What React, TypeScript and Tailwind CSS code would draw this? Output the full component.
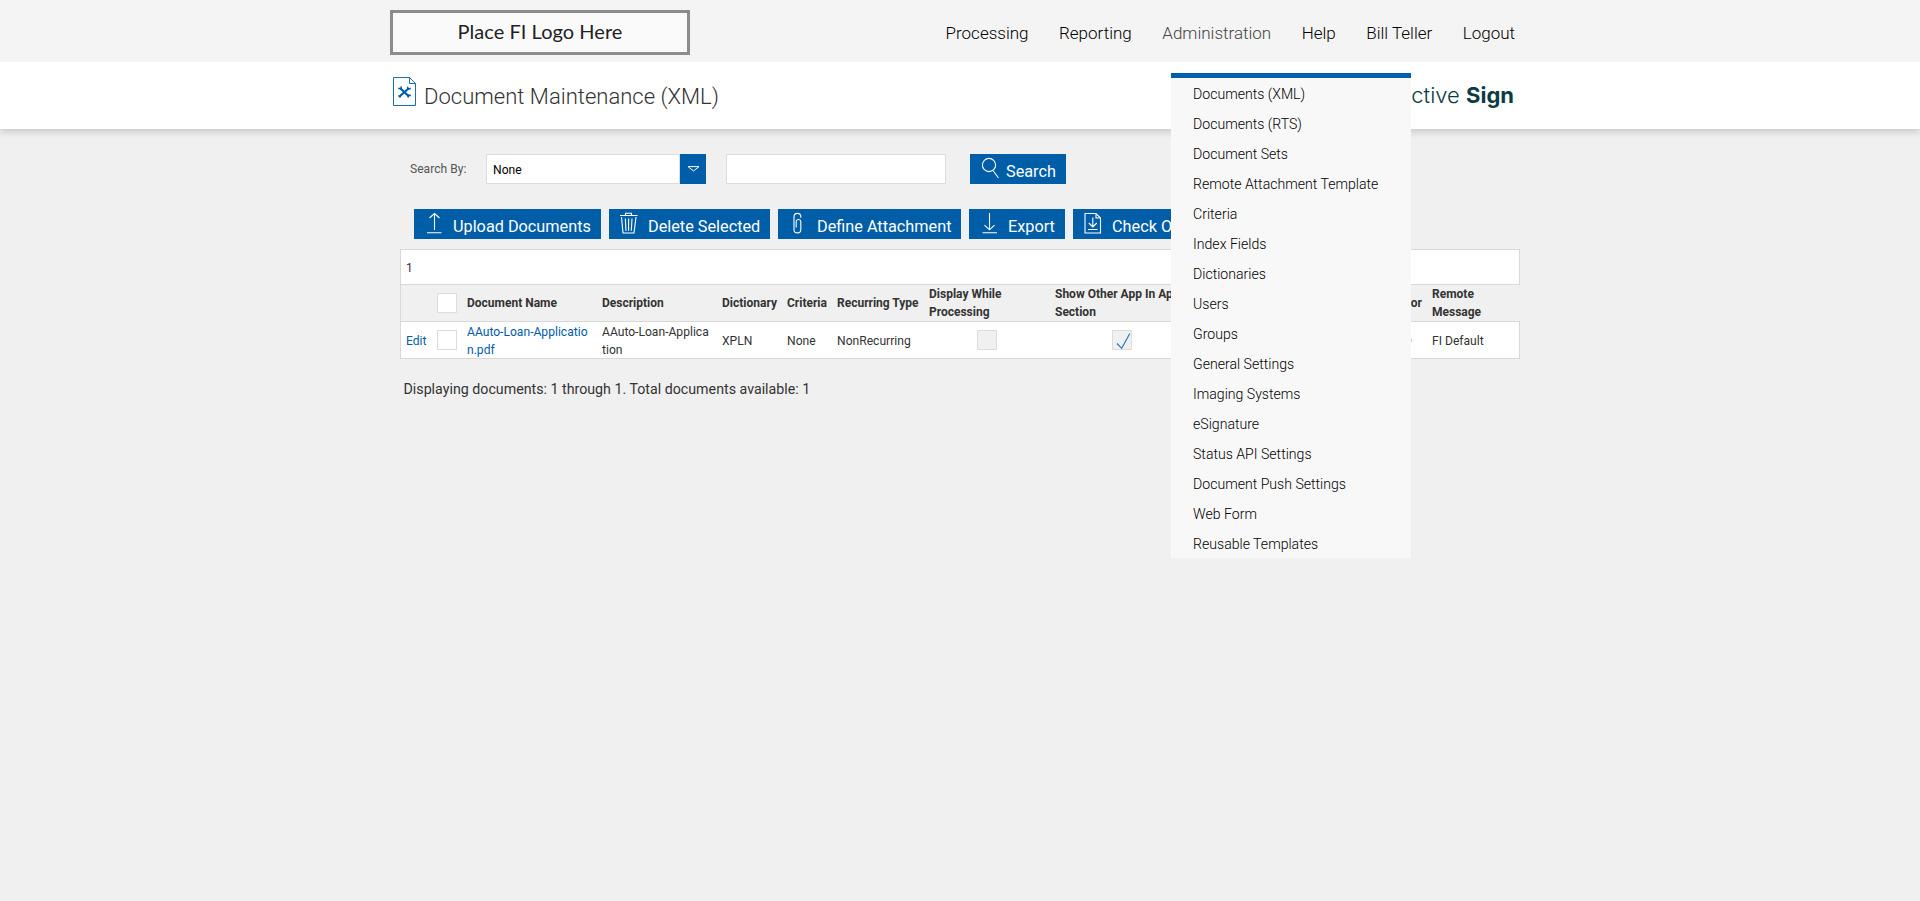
import { clsx } from 'clsx';
import type { ReactNode } from 'react';

const navItems = ['Processing', 'Reporting', 'Administration', 'Help', 'Bill Teller', 'Logout'];

const adminMenu = [
  'Documents (XML)',
  'Documents (RTS)',
  'Document Sets',
  'Remote Attachment Template',
  'Criteria',
  'Index Fields',
  'Dictionaries',
  'Users',
  'Groups',
  'General Settings',
  'Imaging Systems',
  'eSignature',
  'Status API Settings',
  'Document Push Settings',
  'Web Form',
  'Reusable Templates',
];

const columns = [
  'w-[31px]',
  'w-[30px]',
  'w-[135px]',
  'w-[120px]',
  'w-[65px]',
  'w-[50px]',
  'w-[92px]',
  'w-[126px]',
  'w-[160px]',
  'w-[217px]',
  'w-[93px]',
];

const headers: ReactNode[] = [
  '',
  <Checkbox />,
  'Document Name',
  'Description',
  'Dictionary',
  'Criteria',
  'Recurring Type',
  <>Display While<br />Processing</>,
  <span className="whitespace-nowrap">Show Other App In App<br />Section</span>,
  <span className="block pr-[5px] text-right">Signature Editor</span>,
  <>Remote<br />Message</>,
];

const cells: ReactNode[] = [
  <CellText><a className="text-[#005da8]">Edit</a></CellText>,
  <Checkbox />,
  <CellText><a className="text-[#005da8]">AAuto-Loan-Applicatio<br />n.pdf</a></CellText>,
  <CellText>AAuto-Loan-Applica<br />tion</CellText>,
  <CellText>XPLN</CellText>,
  <CellText>None</CellText>,
  <CellText>NonRecurring</CellText>,
  <div className="pl-12"><Checkbox disabled /></div>,
  <div className="pl-[57px]"><Checkbox disabled checked /></div>,
  <div className="flex justify-end pr-[15px]"><span className="h-[3px] w-2 bg-[#a5dcec]" /></div>,
  <CellText>FI Default</CellText>,
];

function CellText({ children }: { children: ReactNode }) {
  return <div className="mt-px -mb-px">{children}</div>;
}

function Checkbox({ disabled, checked }: { disabled?: boolean; checked?: boolean }) {
  return (
    <div className={clsx('size-5 border border-[#dcdcdc]', disabled ? 'bg-[#f0f0f0]' : 'bg-white')}>
      {checked && (
        <svg width="18" height="18" viewBox="0 0 18 18" fill="none" stroke="#1a77bd" strokeWidth="1.1">
          <path d="M4 12.5l4.7 4.8L16.8 2.5" />
        </svg>
      )}
    </div>
  );
}

function Icon({ children, className }: { children: ReactNode; className?: string }) {
  return (
    <svg className={clsx('shrink-0', className)} width="20" height="22" viewBox="0 0 20 22" fill="none" stroke="currentColor" strokeWidth="1.1">
      {children}
    </svg>
  );
}

function Button({ icon, label, className }: { icon: ReactNode; label: string; className: string }) {
  return (
    <button className={clsx('flex h-[30px] shrink-0 items-start bg-[#005da8] pt-[3px] text-[16.25px] leading-[29px] font-[450] whitespace-nowrap text-white', className)}>
      {icon}
      {label}
    </button>
  );
}

function AdminDropdown() {
  return (
    <ul className="absolute top-[73px] left-[781px] z-10 w-60 border-t-5 border-[#005da8] bg-[#f8f8f8]">
      {adminMenu.map((item) => (
        <li key={item} className="h-[30px] pl-[22px] text-[14.1px] leading-[32px] font-light text-black">{item}</li>
      ))}
    </ul>
  );
}

export default function App() {
  return (
    <div className="min-h-screen bg-[#f0f0f0] font-[Roboto,sans-serif] text-[#333]">
      <header className="relative z-10 bg-[#f4f4f4]">
        <div className="relative mx-auto flex h-[62px] w-[1140px] items-start justify-between pt-[10px]">
          <div className="flex h-[45px] w-[300px] items-center justify-center border-3 border-[#8c8c8c] bg-[#fafafa] pb-[3px] font-[Lato,sans-serif] text-[20px] tracking-[0.002em] text-[#222]">
            Place FI Logo Here
          </div>
          <nav className="flex gap-[30.5px] pr-[15px] text-[17px] leading-[46px] font-light text-black">
            {navItems.map((item) => (
              <a key={item} className={clsx(item === 'Administration' && 'text-[#444]')}>{item}</a>
            ))}
          </nav>
          <AdminDropdown />
        </div>
      </header>

      <div className="relative bg-white shadow-[0_2px_8px_rgba(0,0,0,0.2)]">
        <div className="mx-auto flex h-[67px] w-[1140px] items-start justify-between pr-4 pl-[3px]">
          <div className="flex">
            <svg className="mt-[15px]" width="24" height="29" viewBox="0 0 24 29" fill="none" stroke="#005da8">
              <path d="M.5.5H16.5L22.5 6.5V28.5H.5zM16.5.5V6.5H22.5" strokeWidth=".9" />
              <path d="M7.5 11.5L16 19.5M15.5 11.5L6.5 19.5" strokeWidth="2.2" />
              <path d="M5.3 11.3l2.7.7.2-2.6M14.6 9.6l.3 2.4 2.9-.6M15 20.5l.4-2.3 2.5.3M5.5 18.5l2 2" strokeWidth="1.5" />
            </svg>
            <h1 className="ml-[7px] pt-[18px] text-[22.05px] leading-[34px] font-light">Document Maintenance (XML)</h1>
          </div>
          <div className="pt-[16px] font-[Inter,sans-serif] text-[22px] leading-[34px] font-light text-[#0b3c43]">
            Active <span className="font-bold">Sign</span>
          </div>
        </div>
      </div>

      <main className="mx-auto w-[1120px] pt-[25px]">
        <div className="flex h-[30px] pl-[10px]">
          <label className="w-[76px] text-[12.1px] leading-[30px] text-[#555]">Search By:</label>
          <div className="flex w-[220px]">
            <div className="flex-1 border border-[#dcdcdc] bg-white pl-[6px] text-[12.1px] leading-[30px] text-black">None</div>
            <div className="flex w-[26px] items-center justify-center bg-[#005da8]">
              <svg width="13" height="6" viewBox="0 0 13 6" fill="none" stroke="#fff">
                <path d="M1 .6H12L6.5 5z" />
              </svg>
            </div>
          </div>
          <input className="ml-5 w-[220px] border border-[#dcdcdc] bg-white" />
          <Button
            className="ml-6 w-24 pl-[11px]"
            label="Search"
            icon={
              <Icon className="mr-[5px]">
                <circle cx="8" cy="8" r="6.6" />
                <path d="M12 13.5L17.5 21" />
              </Icon>
            }
          />
        </div>

        <div className="mt-[25px] flex gap-2 overflow-hidden pl-[14px]">
          <Button
            className="w-[187px] pl-[11px]"
            label="Upload Documents"
            icon={
              <Icon className="mr-2">
                <path d="M9.5 18V2M4.5 6L9.5 1.5L14.5 6M2 20.8H16.5" />
              </Icon>
            }
          />
          <Button
            className="w-[161px] pl-[10px]"
            label="Delete Selected"
            icon={
              <Icon className="mr-[9px]">
                <path d="M1 3.5H18.5M6.5 3.5V1.3H12.5V3.5M2.5 5L4 21H15L17 5M6.3 6.5L7 18.8M9.6 6.5V18.8M13 6.5L12.3 18.8" />
              </Icon>
            }
          />
          <Button
            className="w-[183px] pl-[10px]"
            label="Define Attachment"
            icon={
              <Icon className="mr-[9px]">
                <path d="M6 5.5V17.5A3.4 3.4 0 0 0 12.8 17.5V9.2A2.4 2.4 0 0 0 8.2 9.2V15.5M6 6V4.8A3.4 3.4 0 0 1 12.8 4.8V5.8" />
              </Icon>
            }
          />
          <Button
            className="w-24 pl-[11px]"
            label="Export"
            icon={
              <Icon className="mr-2">
                <path d="M9.5 1V17.5M4.5 13.2L9.5 17.8L14.5 13.2M2.5 20.8H17" />
              </Icon>
            }
          />
          <Button
            className="w-[125px] pl-[10px]"
            label="Check Out"
            icon={
              <Icon className="mr-[9px]">
                <path d="M2 1.5H13L17.5 6V21H2zM13 1.5V6H17.5M9.8 5.5V14.5M5.8 11L9.8 15L13.8 11M5 17.5H14.5" />
              </Icon>
            }
          />
        </div>

        <div className="mt-[10px] border border-[#d8d8d8] bg-white">
          <div className="h-[34px] pl-[5px] text-[12px] leading-[36px]">1</div>
          <table className="w-[1118px] table-fixed border-separate border-spacing-0 text-left text-[12.1px] leading-[18px]">
            <colgroup>
              {columns.map((width, i) => (
                <col key={i} className={width} />
              ))}
            </colgroup>
            <thead>
              <tr className="bg-[#f0f0f0]">
                {headers.map((header, i) => (
                  <th key={i} className="h-[37px] border-t border-[#d8d8d8] p-0 pl-[5px] align-middle text-[12px] font-bold">{header}</th>
                ))}
              </tr>
            </thead>
            <tbody>
              <tr>
                {cells.map((cell, i) => (
                  <td key={i} className="h-[37px] border-t border-[#d8d8d8] p-0 pl-[5px] align-middle whitespace-nowrap">{cell}</td>
                ))}
              </tr>
            </tbody>
          </table>
        </div>

        <p className="mt-5 pl-[3.5px] text-[14.23px] leading-5">Displaying documents: 1 through 1. Total documents available: 1</p>
      </main>
    </div>
  );
}
